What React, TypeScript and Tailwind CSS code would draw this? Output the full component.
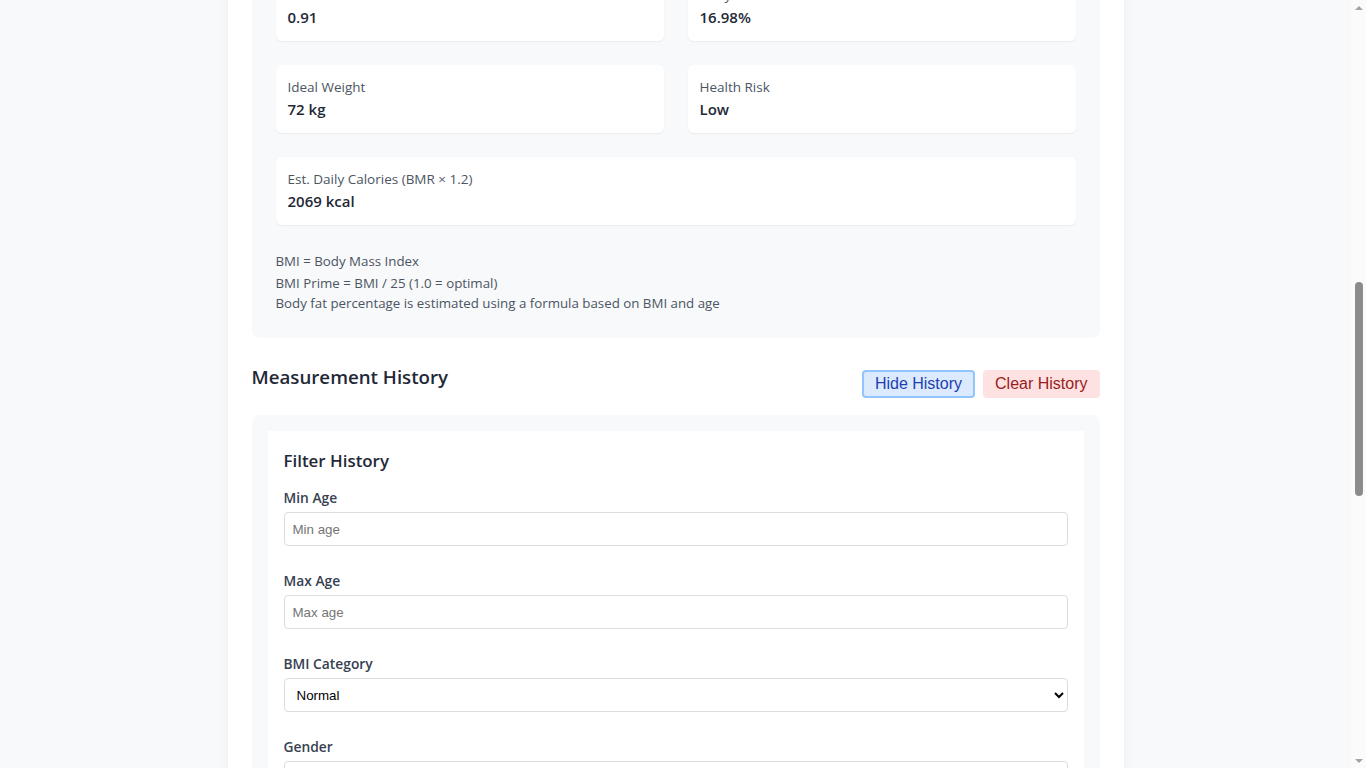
import { useLayoutEffect, useRef } from "react";

function StatCard({ label, value, full, anchor }: { label: string; value: string; full?: boolean; anchor?: boolean }) {
  return (
    <div
      data-anchor={anchor ? "1" : undefined}
      className={`bg-white rounded-md p-3 shadow-[0_1px_2px_rgba(0,0,0,0.06)] ${full ? "col-span-2" : ""}`}
    >
      <div className="text-[13.5px] leading-5 text-[#4b5563]">{label}</div>
      <div className="text-[15px] leading-6 font-semibold text-[#1f2937]">{value}</div>
    </div>
  );
}

const inputCls =
  "w-full h-[34px] px-2 border border-[#dcdde1] rounded text-[13.33px] leading-[16px] font-['Liberation_Sans',Arial,sans-serif] text-black placeholder:text-[#757575] bg-white";
const labelCls = "block text-[13.8px] leading-5 font-semibold text-[#374151] mb-1";

function Field({ label, placeholder }: { label: string; placeholder: string }) {
  return (
    <div className="mb-[25px]">
      <label className={labelCls}>{label}</label>
      <input placeholder={placeholder} className={inputCls} />
    </div>
  );
}

function SelectField({ label, value, options }: { label: string; value: string; options: string[] }) {
  return (
    <div className="mb-[25px]">
      <label className={labelCls}>{label}</label>
      <select defaultValue={value} className={inputCls}>
        {options.map((o) => (
          <option key={o}>{o}</option>
        ))}
      </select>
    </div>
  );
}

function FormInput({ label, value }: { label: string; value: string }) {
  return (
    <div>
      <label className={labelCls}>{label}</label>
      <input defaultValue={value} className={inputCls} />
    </div>
  );
}

const history = [
  { date: "2024-05-12 09:41", age: 25, gender: "Male", h: 175, w: 70, bmi: "22.86", cat: "Normal" },
  { date: "2024-05-05 08:12", age: 25, gender: "Male", h: 175, w: 71, bmi: "23.18", cat: "Normal" },
  { date: "2024-04-28 19:03", age: 25, gender: "Male", h: 175, w: 72, bmi: "23.51", cat: "Normal" },
];

function ScrollBar() {
  return (
    <div className="w-[15px] shrink-0 bg-[#fbfbfb] flex flex-col">
      <div className="h-[15px] flex items-center justify-center">
        <div className="w-0 h-0 border-l-[4px] border-r-[4px] border-b-[4px] border-l-transparent border-r-transparent border-b-[#a3a3a3]" />
      </div>
      <div className="flex-1 flex justify-center">
        <div className="mt-[267px] w-[8px] h-[214px] rounded-full bg-[#8c8c8c]" />
      </div>
      <div className="h-[15px] flex items-center justify-center">
        <div className="w-0 h-0 border-l-[4px] border-r-[4px] border-t-[4px] border-l-transparent border-r-transparent border-t-[#a3a3a3]" />
      </div>
    </div>
  );
}

export default function App() {
  const scroller = useRef<HTMLDivElement>(null);

  useLayoutEffect(() => {
    const sc = scroller.current;
    if (!sc) return;
    const el = sc.querySelector("[data-anchor]") as HTMLElement | null;
    if (!el) return;
    const offset = el.getBoundingClientRect().top - sc.getBoundingClientRect().top + sc.scrollTop;
    sc.scrollTop = offset - 65;
  }, []);

  return (
    <div className="h-screen flex overflow-hidden bg-[#f8f9fa] font-['Open_Sans','Noto_Sans',sans-serif]">
      <div ref={scroller} className="flex-1 overflow-hidden">
        <div className="py-8">
          <div className="max-w-4xl mx-auto bg-white p-6 rounded-lg shadow-[0_0_12px_rgba(0,0,0,0.05)]">
            <h1 className="text-3xl font-bold text-[#1f2937] mb-6">BMI Calculator</h1>

            <div className="grid grid-cols-2 gap-6 mb-6">
              <FormInput label="Age" value="25" />
              <div>
                <label className={labelCls}>Gender</label>
                <select defaultValue="Male" className={inputCls}>
                  <option>Male</option>
                  <option>Female</option>
                </select>
              </div>
              <FormInput label="Height (cm)" value="175" />
              <FormInput label="Weight (kg)" value="70" />
            </div>

            <div className="flex gap-2 mb-8">
              <button className="px-4 py-2 rounded bg-[#2563eb] text-white font-['Liberation_Sans',Arial,sans-serif]">
                Calculate
              </button>
              <button className="px-4 py-2 rounded bg-[#e5e7eb] text-[#1f2937] font-['Liberation_Sans',Arial,sans-serif]">
                Reset
              </button>
            </div>

            <div className="bg-[#f8f9fa] rounded-lg px-6 pt-6 pb-[25px]">
              <h2 className="text-[18.7px] font-semibold text-[#1f2937] mb-4">Results</h2>
              <div className="bg-white rounded-md p-6 mb-6 text-center shadow-[0_1px_2px_rgba(0,0,0,0.06)]">
                <div className="text-sm text-[#4b5563]">Your BMI</div>
                <div className="text-5xl font-bold text-[#16a34a] my-2">22.86</div>
                <div className="text-lg font-semibold text-[#16a34a]">Normal weight</div>
              </div>
              <div className="grid grid-cols-2 gap-6">
                <StatCard label="BMI" value="22.86" />
                <StatCard label="Category" value="Normal" />
                <StatCard label="BMI Prime" value="0.91" />
                <StatCard label="Body Fat" value="16.98%" />
                <StatCard label="Ideal Weight" value="72 kg" anchor />
                <StatCard label="Health Risk" value="Low" />
                <StatCard label="Est. Daily Calories (BMR × 1.2)" value="2069 kcal" full />
              </div>
              <div className="mt-[26px] text-[13.3px] leading-5 text-[#4b5563]">
                <p className="mb-0.5">BMI = Body Mass Index</p>
                <p>BMI Prime = BMI / 25 (1.0 = optimal)</p>
                <p>Body fat percentage is estimated using a formula based on BMI and age</p>
              </div>
            </div>

            <div className="mt-6 flex items-start justify-between">
              <h2 className="text-[18.7px] leading-[30px] font-semibold text-[#1f2937]">Measurement History</h2>
              <div className="mt-2 flex gap-2 font-['Liberation_Sans',Arial,sans-serif] text-base leading-[18px]">
                <button className="px-[11px] py-[3px] rounded border-2 border-[#93c5fd] bg-[#dbeafe] text-[#1e40af]">
                  Hide History
                </button>
                <button className="px-3 py-1 rounded bg-[#fee2e2] text-[#991b1b]">Clear History</button>
              </div>
            </div>

            <div className="mt-[17px] bg-[#f8f9fa] rounded-lg p-4">
              <div className="bg-white p-4">
                <h3 className="text-[16.9px] leading-7 font-semibold text-[#1f2937] mb-[13px]">Filter History</h3>
                <Field label="Min Age" placeholder="Min age" />
                <Field label="Max Age" placeholder="Max age" />
                <SelectField
                  label="BMI Category"
                  value="Normal"
                  options={["All", "Underweight", "Normal", "Overweight", "Obese"]}
                />
                <SelectField label="Gender" value="All" options={["All", "Male", "Female"]} />
                <button className="px-4 py-2 rounded bg-[#2563eb] text-white font-['Liberation_Sans',Arial,sans-serif]">
                  Apply Filters
                </button>
              </div>

              <div className="mt-4 flex flex-col gap-3">
                {history.map((h) => (
                  <div key={h.date} className="bg-white rounded-md p-4 shadow-[0_1px_2px_rgba(0,0,0,0.06)]">
                    <div className="flex justify-between text-sm text-[#4b5563] mb-1">
                      <span>{h.date}</span>
                      <span className="font-semibold text-[#16a34a]">{h.cat}</span>
                    </div>
                    <div className="text-base font-semibold text-[#1f2937]">BMI {h.bmi}</div>
                    <div className="text-sm text-[#4b5563]">
                      Age {h.age} · {h.gender} · {h.h} cm · {h.w} kg
                    </div>
                  </div>
                ))}
              </div>
            </div>
          </div>
        </div>
      </div>
      <ScrollBar />
    </div>
  );
}
